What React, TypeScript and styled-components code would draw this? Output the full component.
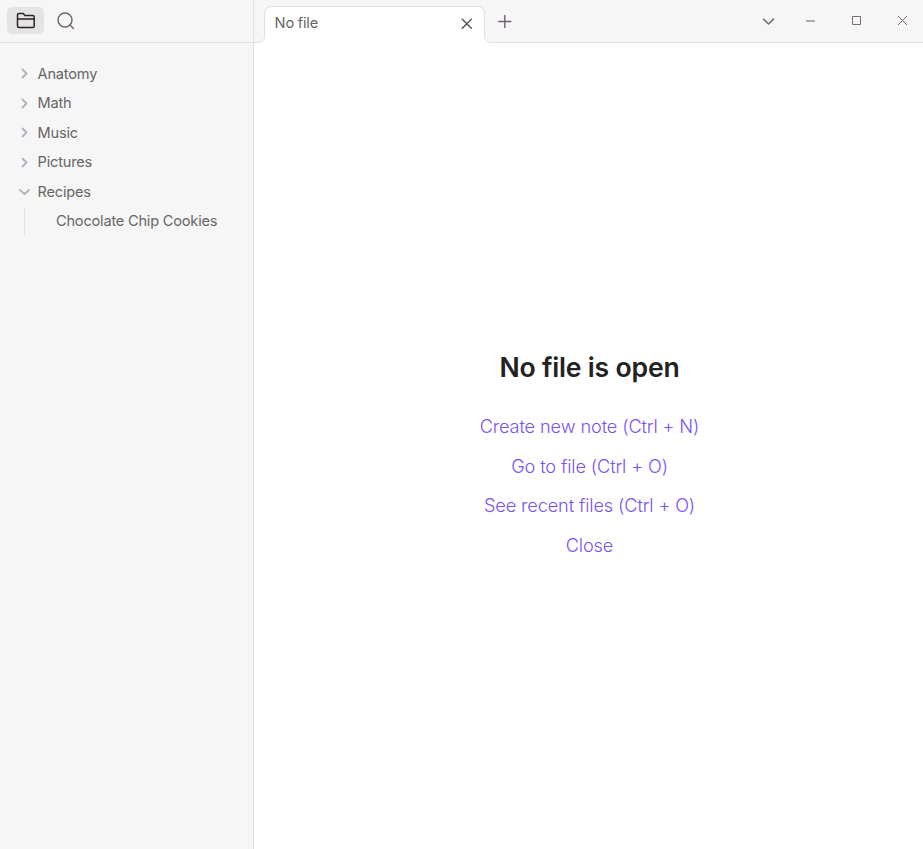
import React from "react";
import styled, { createGlobalStyle } from "styled-components";

const line = "#e0e0e0";

const GlobalStyle = createGlobalStyle`
  * { box-sizing: border-box; }
  body { margin: 0; background: #fff; font-family: Inter, "Liberation Sans", sans-serif; }
  button { font: inherit; border: 0; padding: 0; background: none; }
`;

const Window = styled.div`
  display: grid;
  grid-template-columns: 254px 1fr;
  height: 849px;
  overflow: hidden;
`;

const Sidebar = styled.aside`
  background: #f6f6f6;
  border-right: 1px solid ${line};
`;

const SidebarBar = styled.div`
  display: flex;
  align-items: flex-start;
  gap: 3px;
  height: 43px;
  padding: 7px;
  border-bottom: 1px solid ${line};
`;

const ToolButton = styled.button<{ $active?: boolean }>`
  display: flex;
  align-items: center;
  justify-content: center;
  width: 37px;
  height: 27px;
  border-radius: 5px;
  color: ${(p) => (p.$active ? "#2a2228" : "#705f70")};
  background: ${(p) => (p.$active ? "#e4e4e4" : "transparent")};
`;

const Tree = styled.nav`
  padding: 16.05px 0 0 18px;
`;

const Row = styled.div`
  display: flex;
  align-items: center;
  height: 29.45px;
  font-size: 14.6px;
  letter-spacing: -0.21px;
  color: #666;
  white-space: nowrap;
`;

const Chevron = styled.span`
  display: flex;
  width: 19.6px;
  color: #b3afbe;
`;

const Children = styled.div`
  margin: 1.7px 0 0 6px;
  padding-left: 31px;
  height: 27px;
  border-left: 1px solid ${line};
`;

const ChildRow = styled(Row)`
  height: 27px;
`;

const Main = styled.main`
  display: flex;
  flex-direction: column;
  min-width: 0;
`;

const TabBar = styled.header`
  display: flex;
  height: 43px;
  padding: 6px 0 0 10px;
  background: #f6f6f6;
  border-bottom: 1px solid ${line};
`;

const Tab = styled.div`
  position: relative;
  display: flex;
  align-items: center;
  justify-content: space-between;
  width: 221px;
  height: 37px;
  padding: 0 10px 4px 9.6px;
  border: 1px solid ${line};
  border-bottom: 0;
  border-radius: 7px 7px 0 0;
  background: #fff;
  font-size: 14.6px;
  letter-spacing: -0.21px;
  color: #666;
`;

const TabFoot = styled.svg<{ $side: "left" | "right" }>`
  position: absolute;
  bottom: 0;
  ${(p) => p.$side}: -7px;
  transform: ${(p) => (p.$side === "right" ? "scaleX(-1)" : "none")};
`;

const TabClose = styled.button`
  display: flex;
  color: #5c5458;
`;

const NewTab = styled.button`
  display: flex;
  align-items: center;
  width: 15px;
  height: 31px;
  margin-left: 12px;
  color: #705f70;
`;

const Controls = styled.div`
  display: flex;
  align-items: center;
  height: 29px;
  margin-left: auto;
`;

const Control = styled.button<{ $width: number }>`
  display: flex;
  align-items: center;
  justify-content: center;
  width: ${(p) => p.$width}px;
  height: 29px;
  color: #7d6a76;
`;

const Empty = styled.section`
  flex: 1;
  display: flex;
  flex-direction: column;
  align-items: center;
  padding: 306px 0 0 2px;
`;

const Title = styled.h1`
  margin: 0 0 22.1px;
  font-size: 26.6px;
  font-weight: 600;
  line-height: 36px;
  letter-spacing: -0.2px;
  color: #222;
`;

const Action = styled.a`
  font-size: 18.2px;
  font-weight: 300;
  letter-spacing: -0.12px;
  line-height: 39.6px;
  color: #7a52f2;
`;

const folders = ["Anatomy", "Math", "Music", "Pictures"];
const actions = ["Create new note (Ctrl + N)", "Go to file (Ctrl + O)", "See recent files (Ctrl + O)", "Close"];

const ChevronIcon = ({ open }: { open?: boolean }) => (
  <svg width="13" height="13" viewBox="0 0 13 13" fill="none" stroke="currentColor" strokeWidth="1.8" strokeLinecap="round" strokeLinejoin="round">
    <path d={open ? "M2 5l4.5 4L11 5" : "M4.5 2.5l4 4-4 4"} />
  </svg>
);

const Foot = ({ side }: { side: "left" | "right" }) => (
  <TabFoot $side={side} width="7" height="7" viewBox="0 0 7 7">
    <path d="M0 6.5C4 6.5 6.5 4 6.5 0H7V7H0Z" fill="#fff" />
    <path d="M0 6.5C4 6.5 6.5 4 6.5 0" fill="none" stroke={line} />
  </TabFoot>
);

export default function App() {
  return (
    <>
      <GlobalStyle />
      <Window>
        <Sidebar>
          <SidebarBar>
            <ToolButton $active aria-label="Files">
              <svg width="20" height="18" viewBox="0 0 20 18" fill="none" stroke="currentColor" strokeWidth="1.5" strokeLinejoin="round">
                <path d="M1.5 14v-11q0-1.5 1.5-1.5h4.2L9 3.5h7.5q1.7 0 1.7 1.7V14q0 1.5-1.5 1.5H3q-1.5 0-1.5-1.5zM1.5 7h16.7" />
              </svg>
            </ToolButton>
            <ToolButton aria-label="Search">
              <svg width="20" height="20" viewBox="0 0 20 20" fill="none" stroke="currentColor" strokeWidth="1.4" strokeLinecap="round">
                <circle cx="9" cy="9" r="7" />
                <path d="M14 14l3.5 3.5" />
              </svg>
            </ToolButton>
          </SidebarBar>
          <Tree>
            {folders.map((name) => (
              <Row key={name}>
                <Chevron><ChevronIcon /></Chevron>
                {name}
              </Row>
            ))}
            <Row>
              <Chevron><ChevronIcon open /></Chevron>
              Recipes
            </Row>
            <Children>
              <ChildRow>Chocolate Chip Cookies</ChildRow>
            </Children>
          </Tree>
        </Sidebar>
        <Main>
          <TabBar>
            <Tab>
              <Foot side="left" />
              No file
              <TabClose aria-label="Close tab">
                <svg width="14" height="14" viewBox="0 0 14 14" fill="none" stroke="currentColor" strokeWidth="1.5" strokeLinecap="round">
                  <path d="M2.3 3.3l9 9M11.3 3.3l-9 9" />
                </svg>
              </TabClose>
              <Foot side="right" />
            </Tab>
            <NewTab aria-label="New tab">
              <svg width="15" height="15" viewBox="0 0 15 15" fill="none" stroke="currentColor" strokeWidth="1.4" strokeLinecap="round">
                <path d="M7.8 1.5v12M1.8 7.5h12" />
              </svg>
            </NewTab>
            <Controls>
              <Control $width={43} aria-label="Tab list">
                <svg width="13" height="9" viewBox="0 0 13 9" fill="none" stroke="currentColor" strokeWidth="1.6" strokeLinecap="round" strokeLinejoin="round">
                  <path d="M1.5 3.2l5 4.8 5-4.8" />
                </svg>
              </Control>
              <Control $width={41} aria-label="Minimize">
                <svg width="9" height="9" viewBox="0 0 9 9" stroke="#b0a8a4" strokeWidth="2"><path d="M0 5h9" /></svg>
              </Control>
              <Control $width={51} aria-label="Maximize">
                <svg width="9" height="9" viewBox="0 0 9 9" fill="none" stroke="currentColor"><path d="M.5 .5h8v8h-8z" /></svg>
              </Control>
              <Control $width={41} aria-label="Close window">
                <svg width="9" height="9" viewBox="0 0 9 9" stroke="currentColor"><path d="M0 0l9 9M9 0l-9 9" /></svg>
              </Control>
            </Controls>
          </TabBar>
          <Empty>
            <Title>No file is open</Title>
            {actions.map((label) => <Action key={label}>{label}</Action>)}
          </Empty>
        </Main>
      </Window>
    </>
  );
}
